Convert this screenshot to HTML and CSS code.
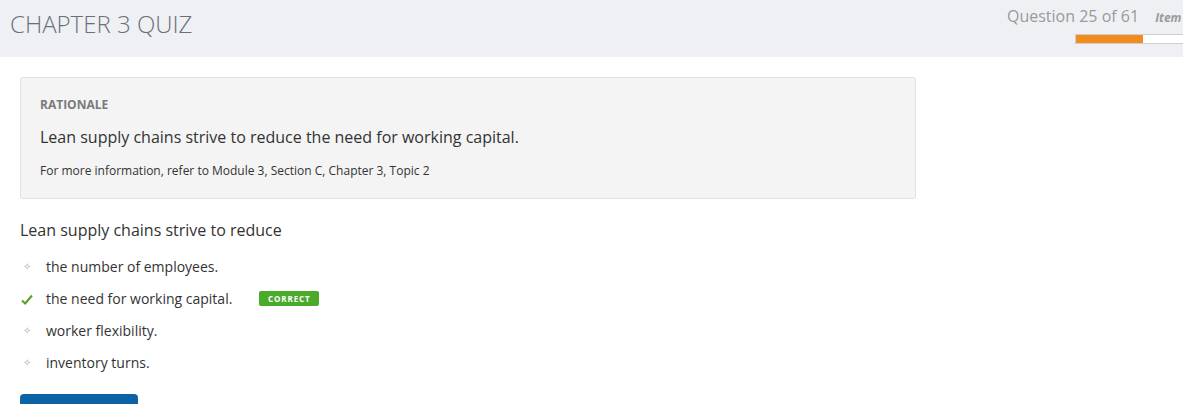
FILE: index.html
```html
<!DOCTYPE html>
<html>
<head>
<meta charset="utf-8">
<link rel="stylesheet" href="styles.css">
</head>
<body>
<header class="topbar">
  <h1 class="title">CHAPTER 3 QUIZ</h1>
  <div class="status">
    <div class="status-line">
      <span class="qcount">Question 25 of 61</span>
      <span class="item">Item</span>
    </div>
    <div class="progress"><div class="progress-fill" style="width:63%"></div></div>
  </div>
</header>
<main class="content">
  <section class="rationale">
    <div class="rationale-label">RATIONALE</div>
    <p class="rationale-text">Lean supply chains strive to reduce the need for working capital.</p>
    <p class="rationale-ref">For more information, refer to Module 3, Section C, Chapter 3, Topic 2</p>
  </section>
  <p class="question">Lean supply chains strive to reduce</p>
  <ul class="options">
    <li class="option"><span class="mark dot">&#x2727;</span><span>the number of employees.</span></li>
    <li class="option"><span class="mark check"><svg width="12" height="11" viewBox="0 0 12 11"><path d="M1 6.5 L4.2 9.5 L11 1.5" fill="none" stroke="#5a9e2a" stroke-width="2"/></svg></span><span>the need for working capital.</span><span class="badge">CORRECT</span></li>
    <li class="option"><span class="mark dot">&#x2727;</span><span>worker flexibility.</span></li>
    <li class="option"><span class="mark dot">&#x2727;</span><span>inventory turns.</span></li>
  </ul>
  <button class="next"></button>
</main>
</body>
</html>
```
FILE: styles.css
```css
* { box-sizing: border-box; }
html, body { margin: 0; padding: 0; background: #fff; }
body { font-family: "Open Sans", "Liberation Sans", sans-serif; color: #333; overflow: hidden; width: 1183px; height: 404px; }
.topbar { height: 57px; background: #eff0f4; display: flex; justify-content: space-between; align-items: flex-start; }
.title { margin: 0; padding: 6px 0 0 10px; font-weight: 300; font-size: 24px; line-height: 36px; color: #69707a; letter-spacing: 0; }
.status { width: 176px; padding-top: 4px; flex-shrink: 0; }
.status-line { display: flex; align-items: baseline; white-space: nowrap; }
.qcount { font-size: 16px; color: #9a9a9a; line-height: 24px; }
.item { font-size: 12px; font-style: italic; font-weight: 700; color: #9a9a9a; margin-left: 16px; }
.progress { margin: 6px 0 0 68px; height: 10px; background: #fff; border: 1px solid #cfcfcf; border-right: none; }
.progress-fill { height: 100%; background: #f28c1e; }
.content { padding: 20px 20px 0 20px; }
.rationale { width: 896px; background: #f4f4f4; border: 1px solid #e2e2e2; border-radius: 3px; padding: 18px 19px 18px; }
.rationale-label { font-size: 12px; font-weight: 700; color: #7a7a7a; line-height: 18px; }
.rationale-text { margin: 11px 0 0; font-size: 16px; line-height: 24px; color: #333; }
.rationale-ref { margin: 13px 0 0; font-size: 12px; line-height: 18px; color: #333; }
.question { margin: 19px 0 0; font-size: 16px; line-height: 24px; color: #333; }
.options { list-style: none; margin: 8px 0 0; padding: 0; }
.option { display: flex; align-items: center; height: 32px; font-size: 14px; color: #333; }
.mark { width: 26px; display: inline-flex; justify-content: flex-start; padding-left: 1px; }
.dot { color: #b0b0b0; font-size: 10px; padding-left: 3px; }
.check svg { display: block; margin-top: 2px; }
.badge { margin-left: 27px; background: #4aaa2a; color: #fff; font-size: 8px; font-weight: 700; letter-spacing: 0.9px; border-radius: 2px; width: 60px; height: 15px; display: inline-flex; align-items: center; justify-content: center; }
.next { margin-top: 16px; width: 118px; height: 40px; background: #0b63a5; border: none; border-radius: 4px; display: block; }
```
